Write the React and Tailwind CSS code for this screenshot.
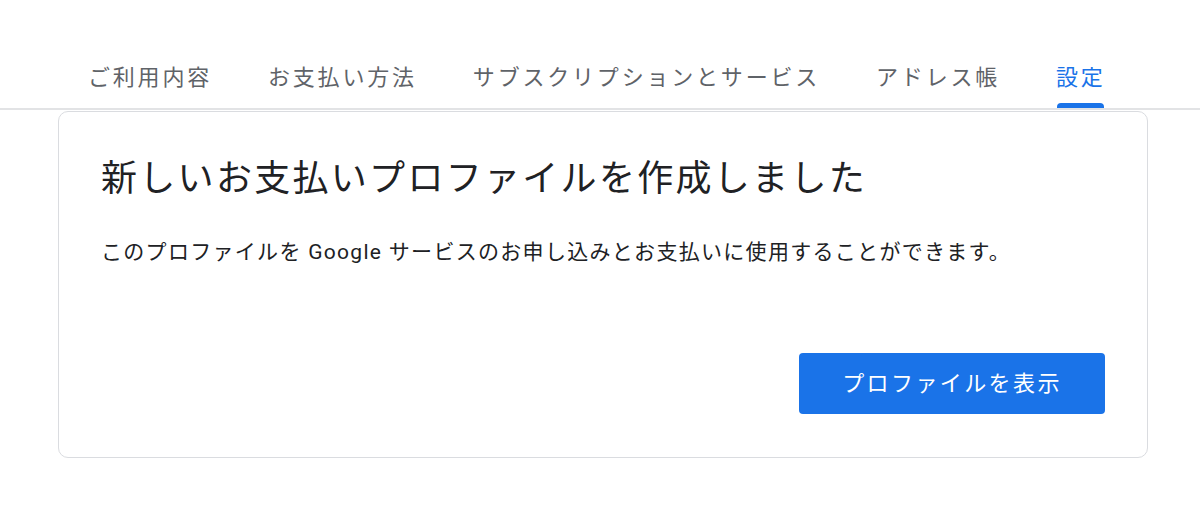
const tabs = ['ご利用内容', 'お支払い方法', 'サブスクリプションとサービス', 'アドレス帳', '設定'];

export default function App() {
  const font = { fontFamily: 'Roboto, "Noto Sans CJK JP", sans-serif' };
  return (
    <div className="min-h-screen bg-white pt-[47px]" style={font}>
      {/* tabs */}
      <div className="border-b-2 border-[#e2e3e5]">
        <div className="flex pl-[60px]">
          {tabs.map((t, i) => {
            const active = i === tabs.length - 1;
            return (
              <div
                key={t}
                className={`relative px-[28px] pt-[16px] pb-[15px] text-[22px] leading-[30px] tracking-[2.8px] ${
                  active ? 'text-[#1a73e8]' : 'text-[#5f6368]'
                }`}
              >
                {t}
                {active && (
                  <div className="absolute bottom-0 left-[29px] right-[30px] h-[5px] rounded-t-[4px] bg-[#1a73e8]" />
                )}
              </div>
            );
          })}
        </div>
      </div>

      {/* card */}
      <div className="ml-[58px] mr-[52px] mt-px rounded-[10px] border border-[#dadce0] px-[42px] pt-[43px] pb-[43px]">
        <h1 className="text-[36px] leading-[48px] tracking-[2.3px] text-[#202124]">
          新しいお支払いプロファイルを作成しました
        </h1>
        <p className="mt-[34px] text-[21px] leading-[30px] tracking-[1.3px] text-[#202124]">
          このプロファイルを Google サービスのお申し込みとお支払いに使用することができます。
        </p>
        <div className="mt-[86px] flex justify-end">
          <button className="h-[61px] w-[306px] rounded-[4px] bg-[#1a73e8] text-[22px] tracking-[2.4px] text-white">
            プロファイルを表示
          </button>
        </div>
      </div>
    </div>
  );
}
